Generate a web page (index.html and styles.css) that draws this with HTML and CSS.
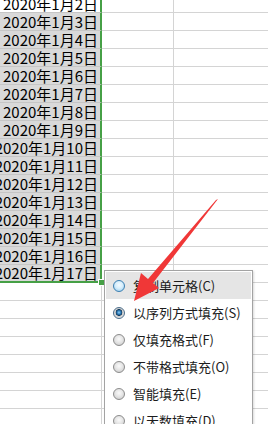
FILE: index.html
```html
<!DOCTYPE html>
<html lang="zh-CN">
<head>
    <meta charset="UTF-8">
    <meta name="viewport" content="width=device-width, initial-scale=1.0">
    <title>填充选项</title>
    <link rel="stylesheet" href="styles.css">
</head>
<body>
    <div class="sheet">
        <div class="cell sel active">2020年1月2日</div><div class="cell"></div><div class="cell last"></div>
        <div class="cell sel">2020年1月3日</div><div class="cell"></div><div class="cell last"></div>
        <div class="cell sel">2020年1月4日</div><div class="cell"></div><div class="cell last"></div>
        <div class="cell sel">2020年1月5日</div><div class="cell"></div><div class="cell last"></div>
        <div class="cell sel">2020年1月6日</div><div class="cell"></div><div class="cell last"></div>
        <div class="cell sel">2020年1月7日</div><div class="cell"></div><div class="cell last"></div>
        <div class="cell sel">2020年1月8日</div><div class="cell"></div><div class="cell last"></div>
        <div class="cell sel">2020年1月9日</div><div class="cell"></div><div class="cell last"></div>
        <div class="cell sel">2020年1月10日</div><div class="cell"></div><div class="cell last"></div>
        <div class="cell sel">2020年1月11日</div><div class="cell"></div><div class="cell last"></div>
        <div class="cell sel">2020年1月12日</div><div class="cell"></div><div class="cell last"></div>
        <div class="cell sel">2020年1月13日</div><div class="cell"></div><div class="cell last"></div>
        <div class="cell sel">2020年1月14日</div><div class="cell"></div><div class="cell last"></div>
        <div class="cell sel">2020年1月15日</div><div class="cell"></div><div class="cell last"></div>
        <div class="cell sel">2020年1月16日</div><div class="cell"></div><div class="cell last"></div>
        <div class="cell sel sel-end">2020年1月17日<span class="handle"></span></div><div class="cell"></div><div class="cell last"></div>
        <div class="cell"></div><div class="cell"></div><div class="cell last"></div>
        <div class="cell"></div><div class="cell"></div><div class="cell last"></div>
        <div class="cell"></div><div class="cell"></div><div class="cell last"></div>
        <div class="cell"></div><div class="cell"></div><div class="cell last"></div>
        <div class="cell"></div><div class="cell"></div><div class="cell last"></div>
        <div class="cell"></div><div class="cell"></div><div class="cell last"></div>
        <div class="cell"></div><div class="cell"></div><div class="cell last"></div>
        <div class="cell"></div><div class="cell"></div><div class="cell last"></div>
    </div>

    <div class="menu">
        <div class="item hover"><span class="radio hot"></span>复制单元格(C)</div>
        <div class="item"><span class="radio on"></span>以序列方式填充(S)</div>
        <div class="item"><span class="radio"></span>仅填充格式(F)</div>
        <div class="item"><span class="radio"></span>不带格式填充(O)</div>
        <div class="item"><span class="radio"></span>智能填充(E)</div>
        <div class="item"><span class="radio"></span>以天数填充(D)</div>
    </div>

    <svg class="arrow" width="268" height="424" viewBox="0 0 268 424">
        <polygon points="218,199 153,283 159,288 134,301 141,273 148,279 216,200" fill="#f03737"/>
    </svg>
</body>
</html>
```

FILE: styles.css
```css
body {
    margin: 0;
    width: 268px;
    height: 424px;
    overflow: hidden;
    position: relative;
    background: #fff;
    font-family: 'Noto Sans CJK SC', sans-serif;
    color: #000;
}
.sheet {
    display: grid;
    grid-template-columns: 102px 72px 1fr;
    margin-top: -5px;
}
.cell {
    height: 18px;
    box-sizing: border-box;
    border-bottom: 1px solid #d4d4d4;
    border-right: 1px solid #d4d4d4;
}
.cell.last { border-right: none; }
.sel {
    position: relative;
    display: flex;
    justify-content: flex-end;
    align-items: flex-end;
    padding-right: 2px;
    background: #d9d9d9;
    border-right: 2px solid #46a046;
    border-bottom-color: #c6c6c6;
    font-size: 15px;
    line-height: 16px;
    white-space: nowrap;
}
.sel.active { background: #fff; }
.sel-end { border-bottom: 2px solid #46a046; }
.handle {
    position: absolute;
    right: -5px;
    bottom: -5px;
    width: 5px;
    height: 5px;
    background: #46a046;
    border: 1px solid #fff;
}
.menu {
    position: absolute;
    left: 104px;
    top: 270px;
    width: 149px;
    height: 170px;
    box-sizing: border-box;
    padding: 1px;
    background: #fff;
    border: 1px solid #a3a3a3;
    box-shadow: 1px 1px 2px rgba(0,0,0,0.15);
}
.item {
    height: 27px;
    display: flex;
    align-items: center;
    gap: 8px;
    padding-left: 7px;
    font-size: 13px;
    color: #1c1c1c;
    white-space: nowrap;
}
.item.hover { background: #e5e5e5; }
.radio {
    width: 12px;
    height: 12px;
    box-sizing: border-box;
    border-radius: 50%;
    border: 1px solid #8c8c8c;
    background: radial-gradient(circle at 50% 40%, #fafafa 0, #e6e6e6 45%, #c4c4c4 100%);
}
.radio.hot {
    border-color: #3c7fb1;
    background: radial-gradient(circle at 50% 40%, #f4fbff 0, #d6eefc 45%, #8ec6ec 100%);
}
.radio.on {
    border-color: #4b6d8a;
    background: radial-gradient(circle at 50% 45%, #8fd0f8 0, #2a78b4 25%, #143a5c 42%, #c8c8c8 48%, #eeeeee 80%, #c0c0c0 100%);
}
.arrow {
    position: absolute;
    left: 0;
    top: 0;
    pointer-events: none;
}
```
